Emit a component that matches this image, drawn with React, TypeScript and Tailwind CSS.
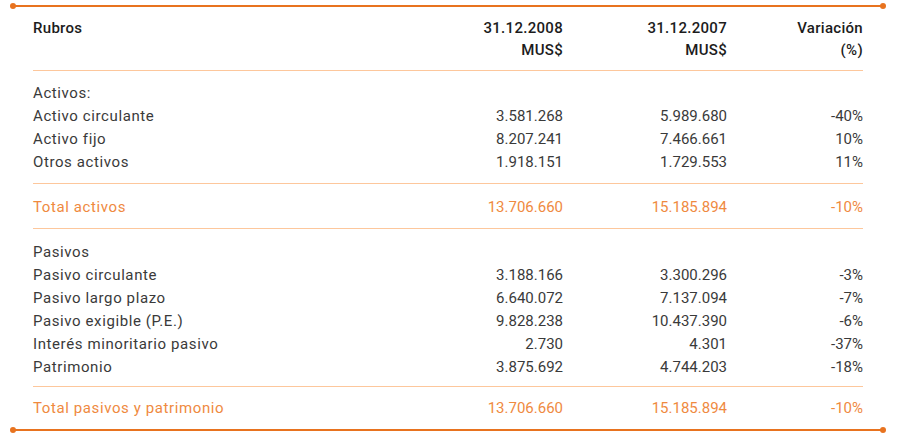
import React from "react";

type Row = [string, string, string, string];

const activos: Row[] = [
  ["Activos:", "", "", ""],
  ["Activo circulante", "3.581.268", "5.989.680", "-40%"],
  ["Activo fijo", "8.207.241", "7.466.661", "10%"],
  ["Otros activos", "1.918.151", "1.729.553", "11%"],
];

const pasivos: Row[] = [
  ["Pasivos", "", "", ""],
  ["Pasivo circulante", "3.188.166", "3.300.296", "-3%"],
  ["Pasivo largo plazo", "6.640.072", "7.137.094", "-7%"],
  ["Pasivo exigible (P.E.)", "9.828.238", "10.437.390", "-6%"],
  ["Interés minoritario pasivo", "2.730", "4.301", "-37%"],
  ["Patrimonio", "3.875.692", "4.744.203", "-18%"],
];

function DataRow({ r, orange }: { r: Row; orange?: boolean }) {
  return (
    <div
      className={`grid grid-cols-[1fr_164px_164px_136px] leading-[23px] h-[23px] ${
        orange ? "text-[#ef8a3f]" : "text-[#3a3a3a]"
      }`}
    >
      <div className="tracking-[0.6px]">{r[0]}</div>
      <div className="text-right">{r[1]}</div>
      <div className="text-right">{r[2]}</div>
      <div className="text-right">{r[3]}</div>
    </div>
  );
}

function ThickLine() {
  return (
    <div className="flex items-center h-[6px] pl-[10px] pr-[14px]">
      <div className="w-[6px] h-[6px] rounded-full bg-[#e8731f]" />
      <div className="flex-1 h-[2px] bg-[#e8731f] -mx-[3px]" />
      <div className="w-[6px] h-[6px] rounded-full bg-[#e8731f]" />
    </div>
  );
}

export default function App() {
  return (
    <div
      className="w-[900px] h-[447px] bg-white pt-[3px] text-[15px]"
      style={{ fontFamily: "Roboto, 'Liberation Sans', sans-serif" }}
    >
      <ThickLine />
      <div className="pl-[33px] pr-[37px]">
        <div className="pt-[7.5px] pb-[8px] border-b border-[#fdc79c]">
          <div className="grid grid-cols-[1fr_164px_164px_136px] leading-[22.67px] font-medium text-[#1c1c1c] tracking-[0.3px]">
            <div>Rubros</div>
            <div className="text-right">
              31.12.2008
              <br />
              MUS$
            </div>
            <div className="text-right">
              31.12.2007
              <br />
              MUS$
            </div>
            <div className="text-right">
              Variación
              <br />
              (%)
            </div>
          </div>
        </div>
        <div className="pt-[11.5px] pb-[8.5px] border-b border-[#fdc79c]">
          {activos.map((r) => (
            <DataRow key={r[0]} r={r} />
          ))}
        </div>
        <div className="pt-[12px] pb-[9px] border-b border-[#fdc79c]">
          <DataRow r={["Total activos", "13.706.660", "15.185.894", "-10%"]} orange />
        </div>
        <div className="pt-[12.5px] pb-[6.5px] border-b border-[#fdc79c]">
          {pasivos.map((r) => (
            <DataRow key={r[0]} r={r} />
          ))}
        </div>
        <div className="pt-[10px] pb-[7px]">
          <DataRow
            r={["Total pasivos y patrimonio", "13.706.660", "15.185.894", "-10%"]}
            orange
          />
        </div>
      </div>
      <ThickLine />
    </div>
  );
}
